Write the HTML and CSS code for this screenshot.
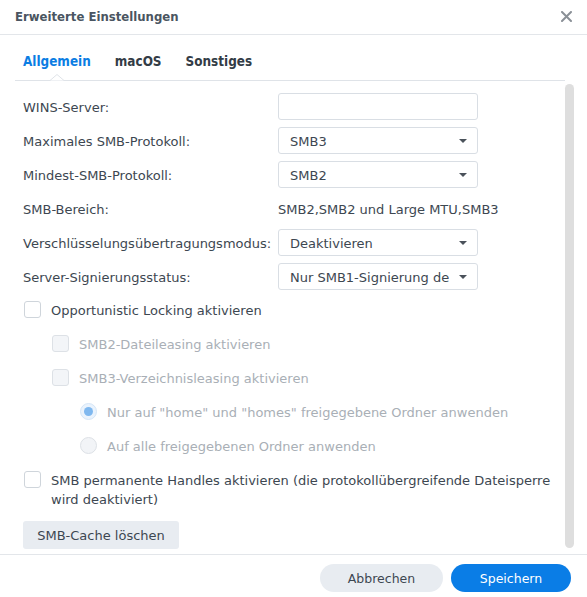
FILE: index.html
```html
<!DOCTYPE html>
<html lang="de">
<head>
<meta charset="utf-8">
<title>Erweiterte Einstellungen</title>
<link rel="stylesheet" href="styles.css">
</head>
<body>
<div class="dialog">
  <header class="header">
    <span class="title">Erweiterte Einstellungen</span>
    <svg class="close" width="11" height="11" viewBox="0 0 11 11"><path d="M1 1L10 10M10 1L1 10" stroke="#8a9097" stroke-width="2" stroke-linecap="round"/></svg>
  </header>
  <nav class="tabs">
    <span class="tab active">Allgemein</span>
    <span class="tab">macOS</span>
    <span class="tab">Sonstiges</span>
    <svg class="notch" width="14" height="7" viewBox="0 0 14 7"><path d="M0 6.5L7 0.5L14 6.5" fill="#fff" stroke="#dfe3e8" stroke-width="1"/></svg>
  </nav>
  <div class="body">
    <div class="content">
      <div class="row"><span class="label">WINS-Server:</span><span class="field"></span></div>
      <div class="row"><span class="label">Maximales SMB-Protokoll:</span><span class="field select">SMB3<i class="caret"></i></span></div>
      <div class="row"><span class="label">Mindest-SMB-Protokoll:</span><span class="field select">SMB2<i class="caret"></i></span></div>
      <div class="row"><span class="label">SMB-Bereich:</span><span class="value">SMB2,SMB2 und Large MTU,SMB3</span></div>
      <div class="row"><span class="label">Verschlüsselungsübertragungsmodus:</span><span class="field select">Deaktivieren<i class="caret"></i></span></div>
      <div class="row"><span class="label">Server-Signierungsstatus:</span><span class="field select">Nur SMB1-Signierung de<i class="caret"></i></span></div>
      <div class="check"><span class="box"></span><span>Opportunistic Locking aktivieren</span></div>
      <div class="check lvl1 disabled"><span class="box"></span><span>SMB2-Dateileasing aktivieren</span></div>
      <div class="check lvl1 disabled"><span class="box"></span><span>SMB3-Verzeichnisleasing aktivieren</span></div>
      <div class="check lvl2 disabled"><span class="radio on"></span><span>Nur auf "home" und "homes" freigegebene Ordner anwenden</span></div>
      <div class="check lvl2 disabled"><span class="radio"></span><span>Auf alle freigegebenen Ordner anwenden</span></div>
      <div class="check multi"><span class="box"></span><span>SMB permanente Handles aktivieren (die protokollübergreifende Dateisperre wird deaktiviert)</span></div>
      <button class="btn secondary">SMB-Cache löschen</button>
    </div>
    <div class="scrollbar"><div class="thumb"></div></div>
  </div>
  <footer class="footer">
    <button class="btn pill secondary cancel">Abbrechen</button>
    <button class="btn pill primary save">Speichern</button>
  </footer>
</div>
</body>
</html>
```
FILE: styles.css
```css
* { box-sizing: border-box; }
html, body { margin: 0; padding: 0; background: #fff; }
body {
  font-family: "DejaVu Sans", Verdana, sans-serif;
  font-size: 13px;
  color: #3d4751;
}
.dialog {
  width: 587px;
  height: 597px;
  display: flex;
  flex-direction: column;
  overflow: hidden;
}
.header {
  height: 35px;
  flex: none;
  display: flex;
  align-items: center;
  justify-content: space-between;
  padding: 0 14px 2px 15px;
  border-bottom: 1px solid #e3e6ea;
}
.title {
  font-family: "DejaVu Sans Condensed", "DejaVu Sans", sans-serif;
  font-weight: bold;
  font-size: 13px;
  color: #4a5561;
}
.close { display: block; margin-right: 1px; }
.tabs {
  position: relative;
  flex: none;
  height: 46px;
  margin: 0 22px 0 15px;
  padding: 17px 0 0 8px;
  display: flex;
  gap: 24px;
  border-bottom: 1px solid #dfe3e8;
}
.tab {
  font-family: "DejaVu Sans Condensed", "DejaVu Sans", sans-serif;
  font-weight: bold;
  font-size: 13.4px;
  color: #333c46;
  line-height: 20px;
}
.tab.active { color: #0b7de3; }
.notch {
  position: absolute;
  left: 35px;
  bottom: -1px;
  display: block;
}
.body {
  flex: 1;
  display: flex;
  min-height: 0;
  border-bottom: 1px solid #e3e6ea;
}
.content {
  flex: 1;
  padding: 12px 0 0 23px;
  display: flex;
  flex-direction: column;
  gap: 7px;
  align-items: flex-start;
}
.row {
  display: flex;
  align-items: center;
  height: 27px;
  padding-top: 1px;
}
.label { width: 255px; flex: none; }
.field {
  width: 200px;
  height: 27px;
  margin-top: -1px;
  border: 1px solid #d9dee4;
  border-radius: 3px;
  display: flex;
  align-items: center;
  padding: 1px 11px 0;
  position: relative;
  color: #3d4751;
}
.caret {
  position: absolute;
  right: 10px;
  top: 11px;
  width: 0;
  height: 0;
  border-left: 4px solid transparent;
  border-right: 4px solid transparent;
  border-top: 4px solid #4a525b;
}
.check {
  display: flex;
  align-items: flex-start;
  gap: 10px;
  padding: 4px 0;
  min-height: 27px;
  line-height: 19px;
  padding-left: 1px;
}
.check.lvl1 { padding-left: 29px; }
.check.lvl2 { padding-left: 57px; }
.check.disabled { color: #a9afb6; }
.check.multi { width: 535px; padding-bottom: 5px; }
.box, .radio {
  flex: none;
  width: 17px;
  height: 17px;
  margin-top: 0;
  border: 1px solid #cfd5db;
  border-radius: 3px;
  background: #fff;
}
.disabled .box { background: #f3f5f8; border-color: #dde1e6; }
.radio {
  border-radius: 50%;
  background: #f2f4f7;
  border-color: #dde1e6;
  position: relative;
}
.radio.on { background: #eaf3fd; border-color: #d5e6f7; }
.radio.on::after {
  content: "";
  position: absolute;
  left: 3px;
  top: 3px;
  width: 9px;
  height: 9px;
  border-radius: 50%;
  background: #7fb8ef;
}
.btn {
  font-family: "DejaVu Sans", Verdana, sans-serif;
  font-size: 13px;
  border: none;
  height: 28px;
  padding: 0 12px;
  border-radius: 3px;
  cursor: pointer;
}
.secondary { background: #e8ecf1; color: #3d4751; }
.content .btn { width: 156px; margin-top: 0; }
.scrollbar {
  width: 9px;
  flex: none;
  margin: 3px 13px 6px 0;
}
.thumb {
  width: 9px;
  height: 100%;
  background: #dedede;
  border-radius: 5px;
}
.footer {
  flex: none;
  height: 42px;
  display: flex;
  justify-content: flex-end;
  gap: 8px;
  padding: 9px 16px 0 0;
}
.pill { border-radius: 14px; font-size: 12.5px; }
.cancel { width: 123px; }
.save { width: 120px; }
.primary { background: #0a7de6; color: #fff; }
```
